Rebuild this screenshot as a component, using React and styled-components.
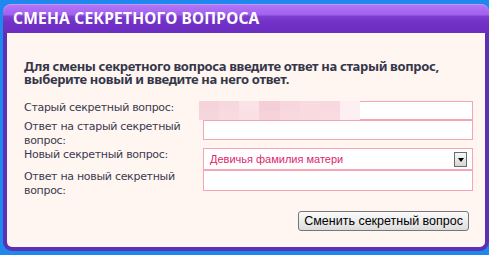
import React from "react";
import styled, { createGlobalStyle } from "styled-components";

const GlobalStyle = createGlobalStyle`
  html, body {
    margin: 0;
    padding: 0;
    background: #1e88ee;
  }
  body {
    width: 489px;
    height: 255px;
    overflow: hidden;
    font-family: "DejaVu Sans", sans-serif;
  }
`;

const Panel = styled.section`
  width: 486px;
  margin: 4px 0 0 3px;
  display: flex;
  flex-direction: column;
`;

const Header = styled.header`
  height: 29px;
  display: flex;
  align-items: center;
  padding-left: 10px;
  border-radius: 8px 8px 0 0;
  background: linear-gradient(
    to bottom,
    #b376f8 0px,
    #a061ee 11px,
    #7f3fd0 12px,
    #7332c7 18px,
    #6b2cc0 29px
  );
  box-shadow: inset 0 1px 0 rgba(255, 255, 255, 0.25);
`;

const Title = styled.h1`
  margin: 0;
  font-family: "Noto Sans", sans-serif;
  font-weight: 700;
  font-size: 15.5px;
  letter-spacing: 0.2px;
  line-height: 29px;
  color: #ffffff;
  white-space: nowrap;
`;

const Body = styled.div`
  background: #fff6f1;
  border: 4px solid #5c31b5;
  border-top: none;
  border-radius: 0 0 9px 9px;
  padding: 27px 12px 16px 17px;
`;

const Intro = styled.p`
  margin: 0;
  font-family: "Noto Sans", sans-serif;
  font-weight: 700;
  font-size: 13px;
  letter-spacing: -0.35px;
  line-height: 13px;
  color: #36364a;
  white-space: nowrap;
`;

const Form = styled.div`
  margin-top: 15px;
  display: grid;
  grid-template-columns: 179px 270px;
  align-items: start;
`;

const Label = styled.label`
  font-family: "DejaVu Sans", sans-serif;
  font-size: 11px;
  letter-spacing: -0.3px;
  line-height: 14px;
  color: #3a3a4e;
  padding-right: 6px;
`;

const Field = styled.div`
  position: relative;
  display: flex;
`;

const TextInput = styled.input`
  box-sizing: border-box;
  width: 270px;
  height: ${(p) => p.$h || 20}px;
  margin: 0;
  padding: 0 4px;
  border: 1px solid #f6a4b6;
  background: #ffffff;
  outline: none;
  font-family: "Liberation Sans", sans-serif;
  font-size: 12px;
`;

const Redaction = styled.div`
  position: absolute;
  left: -4px;
  top: 0;
  width: 161px;
  height: 19px;
  display: grid;
  grid-template-columns: repeat(8, 1fr);
  grid-template-rows: 1fr 1fr;
`;

const Pixel = styled.span`
  background: ${(p) => p.$c};
`;

const SelectBox = styled.div`
  box-sizing: border-box;
  width: 270px;
  height: 22px;
  border: 1px solid #f6a4b6;
  background: #ffffff;
  display: flex;
  align-items: center;
  justify-content: space-between;
  padding: 0 5px 0 6px;
`;

const SelectValue = styled.span`
  font-family: "Liberation Sans", sans-serif;
  font-size: 11px;
  color: #dc1f6c;
`;

const ArrowButton = styled.span`
  box-sizing: border-box;
  width: 13px;
  height: 15px;
  border: 1px solid #6b6b6b;
  background: linear-gradient(to bottom, #f7f7f7, #d6d6d6);
  display: flex;
  align-items: flex-end;
  justify-content: center;
  padding-bottom: 4px;

  &::after {
    content: "";
    width: 0;
    height: 0;
    border-left: 3.5px solid transparent;
    border-right: 3.5px solid transparent;
    border-top: 4px solid #000;
  }
`;

const Actions = styled.div`
  width: 449px;
  margin-top: 13px;
  display: flex;
  justify-content: flex-end;
  padding-right: 4px;
  box-sizing: border-box;
`;

const Button = styled.button`
  box-sizing: border-box;
  height: 20px;
  padding: 0 5px;
  border: 1px solid #767676;
  border-radius: 3px;
  background: linear-gradient(to bottom, #fbfbfb 0%, #ececec 50%, #dcdcdc 100%);
  font-family: "Liberation Sans", sans-serif;
  font-size: 12.5px;
  line-height: 18px;
  color: #000;
  cursor: pointer;
`;

const topRow = ["#f5d3da", "#f7d8de", "#fae2e7", "#f5cfd8", "#f7d7dd", "#f8dadf", "#f8d9df", "#fdeef2"];
const bottomRow = ["#f6d6dd", "#f8dbe0", "#f9e0e5", "#f6d3db", "#f7d9de", "#f8dbe0", "#f9dce2", "#feeff3"];

export default function App() {
  return (
    <>
      <GlobalStyle />
      <Panel>
        <Header>
          <Title>СМЕНА СЕКРЕТНОГО ВОПРОСА</Title>
        </Header>
        <Body>
          <Intro>
            Для смены секретного вопроса введите ответ на старый вопрос,
            <br />
            выберите новый и введите на него ответ.
          </Intro>
          <Form>
            <Label>Старый секретный вопрос:</Label>
            <Field>
              <TextInput $h={19} readOnly />
              <Redaction>
                {[...topRow, ...bottomRow].map((c, i) => (
                  <Pixel key={i} $c={c} />
                ))}
              </Redaction>
            </Field>

            <Label>Ответ на старый секретный вопрос:</Label>
            <Field>
              <TextInput />
            </Field>

            <Label>Новый секретный вопрос:</Label>
            <Field>
              <SelectBox>
                <SelectValue>Девичья фамилия матери</SelectValue>
                <ArrowButton />
              </SelectBox>
            </Field>

            <Label>Ответ на новый секретный вопрос:</Label>
            <Field>
              <TextInput $h={21} />
            </Field>
          </Form>
          <Actions>
            <Button>Сменить секретный вопрос</Button>
          </Actions>
        </Body>
      </Panel>
    </>
  );
}
